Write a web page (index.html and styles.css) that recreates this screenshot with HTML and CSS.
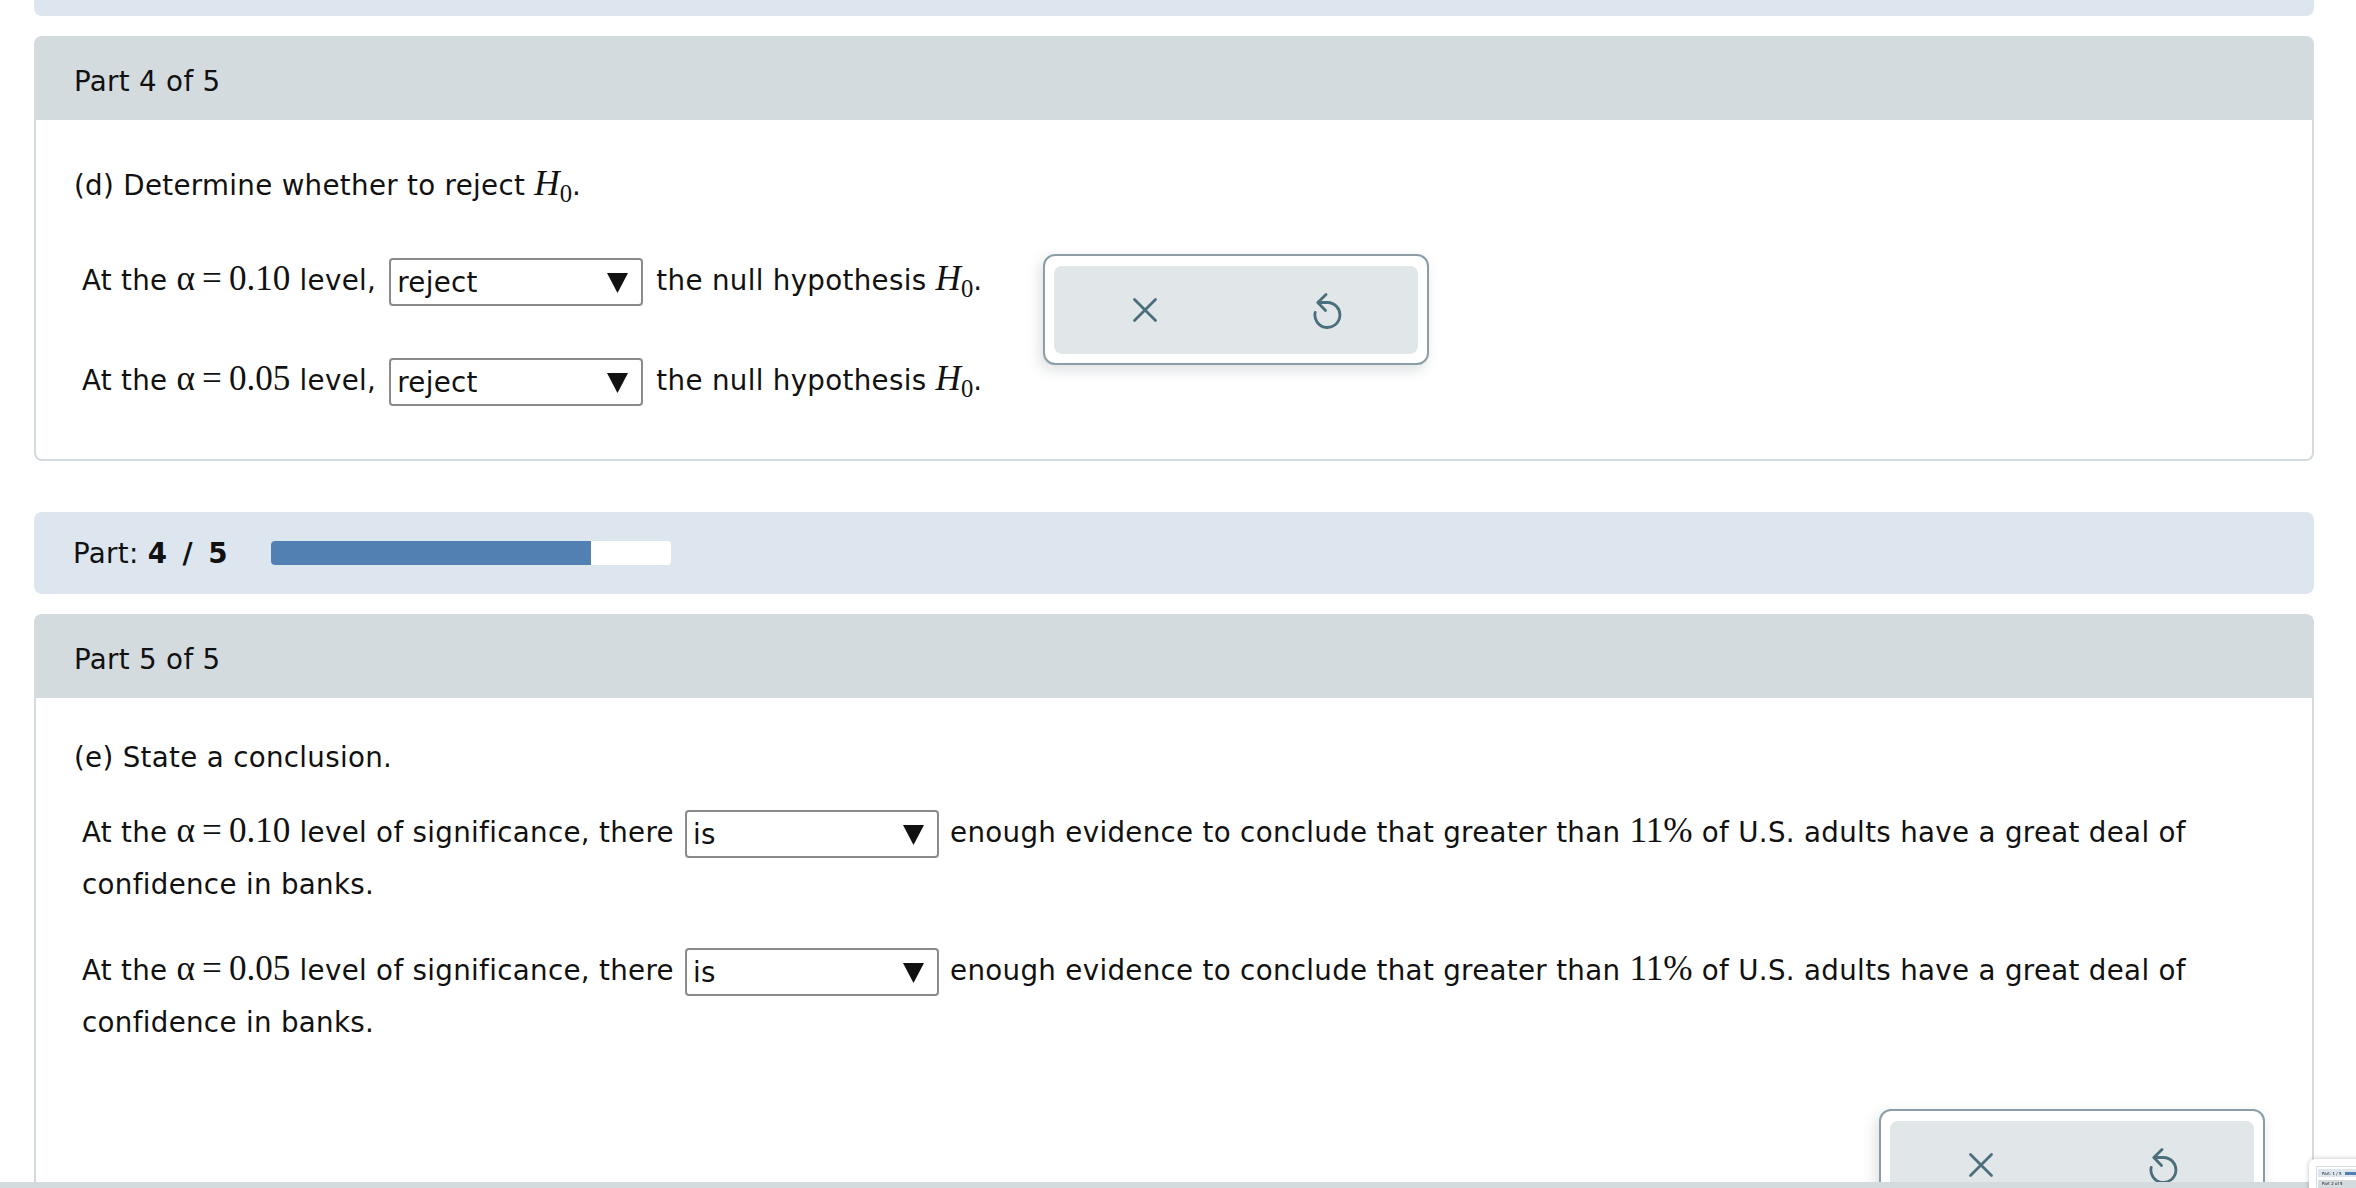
FILE: index.html
```html
<!DOCTYPE html>
<html lang="en">
<head>
<meta charset="utf-8">
<title>Part 4 of 5</title>
<link rel="stylesheet" href="styles.css">
</head>
<body>
<div class="page">
  <div class="topbar"></div>

  <section class="card">
    <div class="card-head">Part 4 of 5</div>
    <div class="card-body body4">
      <p class="prompt">(d) Determine whether to reject <span class="m"><i>H</i><sub>0</sub></span>.</p>
      <div class="qwrap">
        <div class="rows">
          <div class="row">At the <span class="m">α<span class="eq">=</span>0.10</span> level, <span class="sel">reject<svg class="tri" width="21" height="20" viewBox="0 0 21 20"><path d="M0 0H21L10.5 20Z" fill="#111"/></svg></span> the null hypothesis <span class="m"><i>H</i><sub>0</sub></span>.</div>
          <div class="row">At the <span class="m">α<span class="eq">=</span>0.05</span> level, <span class="sel">reject<svg class="tri" width="21" height="20" viewBox="0 0 21 20"><path d="M0 0H21L10.5 20Z" fill="#111"/></svg></span> the null hypothesis <span class="m"><i>H</i><sub>0</sub></span>.</div>
        </div>
        <div class="toolbar tb1">
          <div class="tb-inner">
            <span class="tb-btn"><svg width="26" height="26" viewBox="0 0 26 26"><path d="M2.5 2.5L23.5 23.5M23.5 2.5L2.5 23.5" stroke="#4b6e7c" stroke-width="2.8" stroke-linecap="round" fill="none"/></svg></span>
            <span class="tb-btn"><svg width="31" height="38" viewBox="22 11 31 38"><path d="M28 22.5H37.5A12.5 12.5 0 1 1 25.2 32.3M36 14.5L27.8 22.5L35.5 30.5" stroke="#4b6e7c" stroke-width="2.8" stroke-linecap="round" stroke-linejoin="round" fill="none"/></svg></span>
          </div>
        </div>
      </div>
    </div>
  </section>

  <div class="progress">
    <div class="plabel">Part: <b>4 / 5</b></div>
    <div class="bar"><div class="fill" style="width:80%"></div></div>
  </div>

  <section class="card">
    <div class="card-head">Part 5 of 5</div>
    <div class="card-body body5">
      <p class="prompt">(e) State a conclusion.</p>
      <p class="para p1">At the <span class="m">α<span class="eq">=</span>0.10</span> level of significance, there <span class="sel">is<svg class="tri" width="21" height="20" viewBox="0 0 21 20"><path d="M0 0H21L10.5 20Z" fill="#111"/></svg></span> enough evidence to conclude that greater than <span class="m">11%</span> of U.S. adults have a great deal of confidence in banks.</p>
      <p class="para p2">At the <span class="m">α<span class="eq">=</span>0.05</span> level of significance, there <span class="sel">is<svg class="tri" width="21" height="20" viewBox="0 0 21 20"><path d="M0 0H21L10.5 20Z" fill="#111"/></svg></span> enough evidence to conclude that greater than <span class="m">11%</span> of U.S. adults have a great deal of confidence in banks.</p>
      <div class="tb-wrap">
        <div class="toolbar">
          <div class="tb-inner">
            <span class="tb-btn"><svg width="26" height="26" viewBox="0 0 26 26"><path d="M2.5 2.5L23.5 23.5M23.5 2.5L2.5 23.5" stroke="#4b6e7c" stroke-width="2.8" stroke-linecap="round" fill="none"/></svg></span>
            <span class="tb-btn"><svg width="31" height="38" viewBox="22 11 31 38"><path d="M28 22.5H37.5A12.5 12.5 0 1 1 25.2 32.3M36 14.5L27.8 22.5L35.5 30.5" stroke="#4b6e7c" stroke-width="2.8" stroke-linecap="round" stroke-linejoin="round" fill="none"/></svg></span>
          </div>
        </div>
      </div>
    </div>
  </section>
</div>

<div class="footer-strip"></div>

<div class="minimap">
  <div class="mm-panel">
    <div class="mm-prog"><span>Part: 1 / 5</span><i></i></div>
    <div class="mm-head">Part 2 of 5</div>
  </div>
</div>
</body>
</html>
```

FILE: styles.css
```css
html, body {
  margin: 0;
  padding: 0;
}

body {
  font-family: "DejaVu Sans", Verdana, sans-serif;
  font-size: 27.7px;
  letter-spacing: 0.32px;
  color: #111;
  background: #fff;
  height: 1188px;
  overflow: hidden;
}

.page {
  padding: 0 42px 0 34px;
}

.topbar {
  height: 16px;
  background: #dde6ee;
  border-radius: 0 0 8px 8px;
}

.card {
  margin-top: 20px;
}

.card-head {
  height: 84px;
  box-sizing: border-box;
  background: #d3dbdf;
  border-radius: 8px 8px 0 0;
  display: flex;
  align-items: center;
  padding: 6px 0 0 40px;
}

.card-body {
  border: 2px solid #d3dbdf;
  border-top: 0;
  border-radius: 0 0 8px 8px;
  padding: 40px 40px 52px 38px;
}

.body5 {
  padding-top: 34px;
}

.prompt {
  margin: 0;
  line-height: 52px;
}

.qwrap {
  display: flex;
  align-items: flex-start;
  margin-top: 43px;
}

.rows {
  flex: 0 0 969px;
  box-sizing: border-box;
  padding-left: 8px;
}

.row {
  line-height: 52px;
  white-space: nowrap;
}

.row + .row {
  margin-top: 48px;
}

.m {
  font-family: "Liberation Serif", "Times New Roman", serif;
  font-size: 1.27em;
  letter-spacing: 0;
  line-height: 1;
}

.m i {
  font-style: italic;
}

.m sub {
  font-size: 0.7em;
  vertical-align: -0.28em;
  line-height: 0;
}

.eq {
  margin: 0 0.2em;
}

.sel {
  display: inline-block;
  vertical-align: middle;
  position: relative;
  width: 254px;
  height: 48px;
  box-sizing: border-box;
  border: 2px solid #8a8a8a;
  border-radius: 4px;
  background: #fff;
  padding-left: 6px;
  line-height: 46px;
  text-align: left;
  margin: 0 2px;
}

.row .sel {
  margin: 0 4px 0 4px;
}

.tri {
  position: absolute;
  right: 13px;
  top: 13px;
}

.toolbar {
  width: 386px;
  height: 111px;
  box-sizing: border-box;
  border: 2px solid #8b9ea8;
  border-radius: 12px;
  padding: 10px 9px 9px;
  background: #fff;
  box-shadow: -3px 5px 14px rgba(60, 80, 90, 0.18);
  flex: none;
}

.tb1 {
  margin-top: -1px;
}

.tb-inner {
  display: flex;
  height: 100%;
  background: #e1e6e9;
  border-radius: 8px;
}

.tb-btn {
  flex: 1;
  display: flex;
  align-items: center;
  justify-content: center;
}

.progress {
  margin-top: 51px;
  height: 82px;
  background: #dde6ee;
  border-radius: 8px;
  display: flex;
  align-items: center;
  padding-left: 39px;
}

.plabel {
  width: 198px;
  white-space: nowrap;
}

.plabel b {
  letter-spacing: 3px;
}

.bar {
  width: 400px;
  height: 24px;
  background: #fff;
  border-radius: 4px;
  overflow: hidden;
}

.fill {
  height: 100%;
  background: #5380b2;
}

.para {
  margin: 23px 0 0;
  padding-left: 8px;
  line-height: 52px;
}

.p2 {
  margin-top: 34px;
}

.tb-wrap {
  display: flex;
  justify-content: flex-end;
  margin-top: 60px;
  padding-right: 7px;
}

.footer-strip {
  position: fixed;
  left: 0;
  right: 0;
  bottom: 0;
  height: 6px;
  background: #d3dbdf;
  z-index: 5;
}

.minimap {
  position: fixed;
  left: 2309px;
  top: 1159px;
  width: 60px;
  height: 40px;
  box-sizing: border-box;
  background: #fff;
  border-radius: 6px 0 0 0;
  box-shadow: 0 0 5px rgba(0, 0, 0, 0.25);
  padding: 7px 0 0 7px;
  z-index: 10;
  letter-spacing: 0;
}

.mm-panel {
  height: 100%;
  border-left: 1px solid #d3dbdf;
  border-top: 1px solid #d3dbdf;
  padding: 2px 0 0 1px;
  box-sizing: border-box;
}

.mm-prog {
  display: flex;
  align-items: center;
  gap: 3px;
  height: 8px;
  padding-left: 4px;
  background: #dde6ee;
  font-size: 4px;
  white-space: nowrap;
}

.mm-prog i {
  display: block;
  width: 20px;
  height: 3px;
  background: #5380b2;
}

.mm-head {
  height: 8px;
  margin-top: 3px;
  padding-left: 4px;
  background: #d3dbdf;
  font-size: 4px;
  line-height: 8px;
  white-space: nowrap;
}
```
